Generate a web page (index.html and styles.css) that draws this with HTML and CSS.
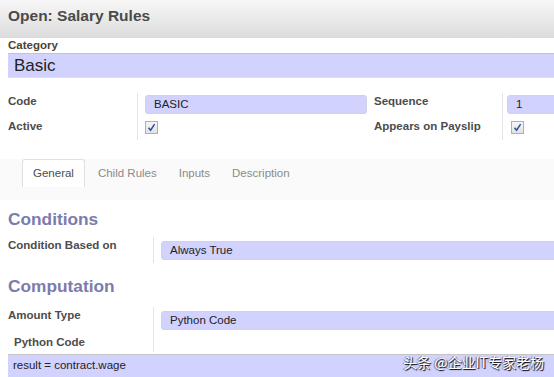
FILE: index.html
```html
<!DOCTYPE html>
<html lang="en">
<head>
  <meta charset="UTF-8">
  <meta name="viewport" content="width=device-width, initial-scale=1.0">
  <title>Open: Salary Rules</title>
  <link rel="stylesheet" href="styles.css">
</head>
<body>
  <div class="title-bar">Open: Salary Rules</div>
  <div class="sheet">
    <div class="field-label">Category</div>
    <div class="input input-big">Basic</div>

    <div class="group">
      <div class="label">Code</div>
      <div class="cell"><div class="input input-small">BASIC</div></div>
      <div class="label label-right">Sequence</div>
      <div class="cell cell-right"><div class="input input-small">1</div></div>

      <div class="label label-low">Active</div>
      <div class="cell cell-low"><span class="checkbox"><svg width="9" height="9" viewBox="0 0 9 9"><path d="M1.5 4.8 L3.6 7.2 L7.6 1.2" fill="none" stroke="#2a4f9e" stroke-width="1.5"/></svg></span></div>
      <div class="label label-right label-low">Appears on Payslip</div>
      <div class="cell cell-right cell-low"><span class="checkbox"><svg width="9" height="9" viewBox="0 0 9 9"><path d="M1.5 4.8 L3.6 7.2 L7.6 1.2" fill="none" stroke="#2a4f9e" stroke-width="1.5"/></svg></span></div>
    </div>

    <div class="tabs">
      <span class="tab active">General</span>
      <span class="tab">Child Rules</span>
      <span class="tab">Inputs</span>
      <span class="tab">Description</span>
    </div>

    <h2 class="section">Conditions</h2>
    <div class="group2">
      <div class="label">Condition Based on</div>
      <div class="cell"><div class="input input-small">Always True</div></div>
    </div>

    <h2 class="section section-second">Computation</h2>
    <div class="group2 group3">
      <div class="label">Amount Type</div>
      <div class="cell"><div class="input input-small">Python Code</div></div>
      <div class="label label-indent">Python Code</div>
      <div class="cell"></div>
    </div>
    <div class="input input-code">result = contract.wage</div>
  </div>
  <div class="watermark">头条 @企业IT专家老杨</div>
</body>
</html>
```

FILE: styles.css
```css
html, body {
  overflow: hidden;
}
body {
  margin: 0;
  font-family: "Liberation Sans", Arial, sans-serif;
  font-size: 11.5px;
  color: #4c4c4c;
  background: #fff;
  width: 554px;
  height: 377px;
  position: relative;
}
.title-bar {
  height: 38px;
  box-sizing: border-box;
  padding: 6px 8px 0;
  font-size: 15.5px;
  line-height: 20px;
  font-weight: bold;
  color: #4a4a4a;
  background: linear-gradient(#f7f7f7, #dcdcdc);
}
.sheet {
  padding-left: 8px;
  width: 560px;
}
.field-label {
  font-weight: bold;
  line-height: 15px;
  color: #4f4232;
}
.input {
  background: #d2d2ff;
  box-sizing: border-box;
  color: #222;
}
.input-big {
  height: 25px;
  border-top: 1px solid #c4c4c4;
  border-bottom: 1px solid #e2e2e2;
  font-size: 17px;
  line-height: 23px;
  padding-left: 6px;
}
.input-small {
  height: 19px;
  border: 1px solid #d0d0e6;
  border-radius: 3px;
  line-height: 17px;
  padding-left: 8px;
}
.group {
  display: grid;
  grid-template-columns: 129px 230px 135px 1fr;
  grid-template-rows: 22px 25px;
  margin-top: 15px;
}
.label {
  font-weight: bold;
  line-height: 15px;
  padding-top: 1px;
}
.label-right {
  padding-left: 7px;
}
.label-low {
  padding-top: 4px;
}
.cell {
  border-left: 1px solid #e4e4e4;
  padding: 2px 0 0 7px;
}
.cell-right {
  padding-left: 4px;
}
.cell-low {
  padding-top: 6px;
}
.cell-right .checkbox {
  margin-left: 4px;
}
.checkbox {
  display: inline-flex;
  align-items: center;
  justify-content: center;
  width: 11px;
  height: 11px;
  border: 1px solid #b0b0b0;
  background: linear-gradient(#f6f6f6, #e2e2e2);
}
.tabs {
  display: flex;
  margin: 19px 0 0 -8px;
  padding: 0 0 13px 22px;
  background: #fafafa;
}
.tab {
  padding: 0 11px;
  line-height: 28px;
  color: #8a8a8a;
}
.tab.active {
  color: #4c4c4c;
  background: #fff;
  border: 1px solid #e0e0e0;
  border-bottom: none;
  border-radius: 3px 3px 0 0;
  line-height: 27px;
  padding: 0 10px;
  margin-right: 2px;
}
.section {
  margin: 8px 0 0;
  font-size: 17.3px;
  line-height: 22px;
  font-weight: bold;
  color: #7c7bad;
}
.section-second {
  margin-top: 12px;
}
.group2 {
  display: grid;
  grid-template-columns: 145px 1fr;
  grid-template-rows: 26px;
  margin-top: 7px;
}
.group2 .cell {
  padding-top: 4px;
}
.group3 {
  grid-template-rows: 24px 21px;
  margin-top: 10px;
}
.label-indent {
  padding: 4px 0 0 6px;
}
.input-code {
  margin-top: 2px;
  height: 23px;
  border-top: 1px solid #c4c4c4;
  line-height: 21px;
  padding-left: 5px;
}
.watermark {
  position: absolute;
  right: 10px;
  bottom: 7px;
  font-family: "Noto Sans CJK SC", sans-serif;
  font-size: 14px;
  line-height: 16px;
  color: #fff;
  text-shadow: 1px 1px 1px #000, -1px 0 1px rgba(0,0,0,0.5);
}
```
